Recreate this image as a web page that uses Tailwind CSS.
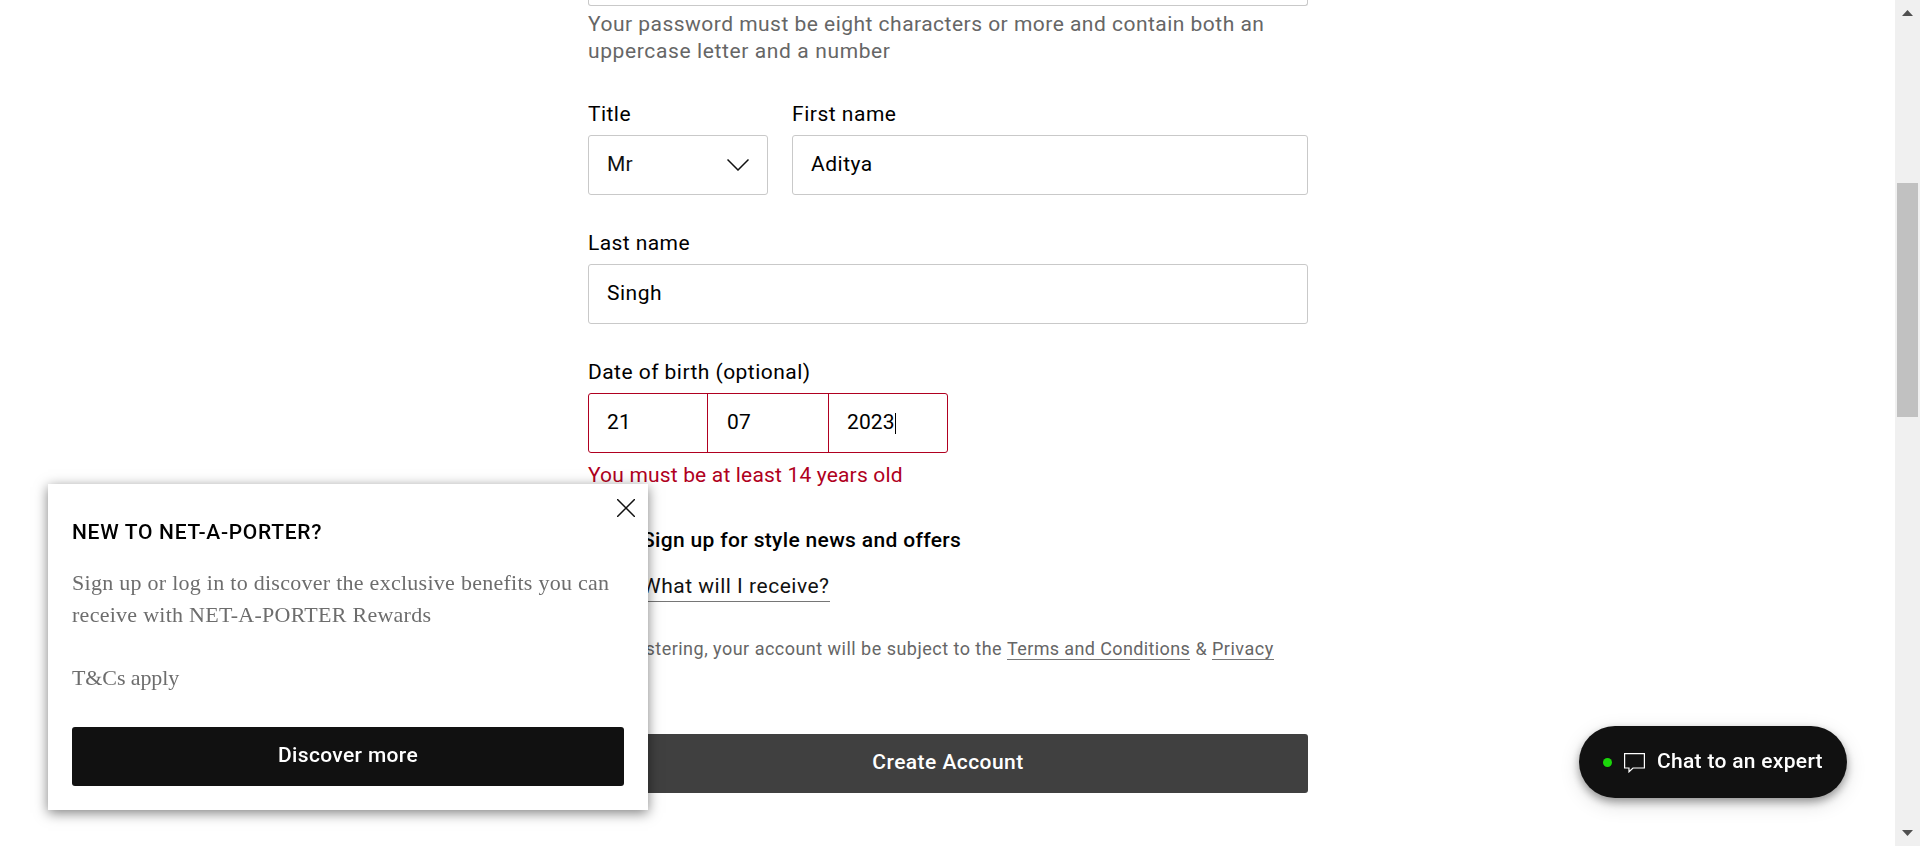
<!DOCTYPE html>
<html lang="en">
<head>
<meta charset="utf-8">
<title>Create account</title>
<script src="https://cdn.jsdelivr.net/npm/@tailwindcss/browser@4"></script>
</head>
<body class="h-[846px] overflow-hidden bg-white font-['Roboto',sans-serif] text-[21px] leading-[27px] text-black">
<div class="flex h-full">
  <main class="flex-1 pl-[588px]">
    <form class="flex w-[720px] flex-col">
      <div class="h-1.5 rounded-b-[3px] border border-t-0 border-[#c9c9c9]"></div>
      <p class="mt-[5px] whitespace-nowrap tracking-[0.48px] text-[#666]">Your password must be eight characters or more and contain both an<br><span class="tracking-[0.62px]">uppercase letter and a number</span></p>

      <div class="mt-9 flex gap-6">
        <div class="w-[180px]">
          <label class="block tracking-[0.45px]">Title</label>
          <div class="mt-[7px] flex h-[60px] items-center justify-between rounded-[3px] border border-[#c9c9c9] pr-[18px] pb-0.5 pl-[18px]">
            <span class="tracking-[0.1px] text-[#111]">Mr</span>
            <svg class="mt-0.5 h-3 w-[22px]" viewBox="0 0 22 12" fill="none" stroke="#111" stroke-width="1.5"><path d="M.5 .5 11 11 21.500 .5"/></svg>
          </div>
        </div>
        <div class="flex-1">
          <label class="block tracking-[0.52px]">First name</label>
          <div class="mt-[7px] flex h-[60px] items-center rounded-[3px] border border-[#c9c9c9] pb-0.5 pl-[18px] tracking-[0.5px]">Aditya</div>
        </div>
      </div>

      <label class="mt-[35px] block tracking-[0.42px]">Last name</label>
      <div class="mt-[7px] flex h-[60px] items-center rounded-[3px] border border-[#c9c9c9] pb-0.5 pl-[18px] tracking-[0.5px]">Singh</div>

      <label class="mt-[35px] block tracking-[0.46px]">Date of birth (optional)</label>
      <div class="mt-[7px] flex h-[60px] w-[360px] rounded-[3px] border border-[#b00020] tracking-[0.1px]">
        <div class="flex w-[119px] items-center border-r border-[#b00020] pb-0.5 pl-[18px]">21</div>
        <div class="flex w-[121px] items-center border-r border-[#b00020] pb-0.5 pl-[19px]">07</div>
        <div class="flex flex-1 items-center pb-0.5 pl-[18px]">2023<span class="mt-0.5 h-[21px] w-px bg-black"></span></div>
      </div>
      <p class="mt-[9px] tracking-[0.17px] text-[#b00020]">You must be at least 14 years old</p>

      <div class="mt-[38px] flex flex-col items-start pl-[54px]">
        <p class="font-medium tracking-[0.34px]">Sign up for style news and offers</p>
        <a class="mt-[19px] h-[29px] border-b border-[#767676] tracking-[0.51px] text-[#111]">What will I receive?</a>
      </div>

      <p class="mt-[35px] flex h-6 text-[18px] leading-6 whitespace-nowrap text-[#666]">
        <span class="w-[419px] tracking-[0.48px]">By registering, your account will be subject to the</span>
        <a class="h-[23px] w-[183px] border-b border-[#767676] tracking-[0.38px]">Terms and Conditions</a>
        <span class="w-[22px] text-center">&amp;</span>
        <a class="h-[23px] w-[62px] border-b border-[#767676] tracking-[0.5px]">Privacy</a>
      </p>

      <button type="button" class="mt-[73px] h-[59px] rounded-[3px] bg-[#404040] pb-[3px] font-medium tracking-[0.45px] text-white">Create Account</button>
    </form>
  </main>

  <div class="flex w-[25px] flex-col items-center justify-between bg-[#f0f0f0]">
    <svg class="mt-2.5 h-1.5 w-[11px]" viewBox="0 0 11 6"><path d="M0 6 5.500 0 11 6z" fill="#505050"/></svg>
    <div class="mt-[167px] h-[234px] w-[21px] bg-[#c1c1c1]"></div>
    <svg class="mt-auto mb-2.5 h-1.5 w-[11px]" viewBox="0 0 11 6"><path d="M0 0 5.500 6 11 0z" fill="#505050"/></svg>
  </div>
</div>

<!-- Rewards pop-up -->
<aside class="fixed top-[484px] left-12 flex h-[326px] w-[600px] flex-col bg-white px-6 pt-[35px] shadow-[0_3px_12px_rgba(0,0,0,0.5)]">
  <svg class="absolute top-[15px] right-[13px] size-[18px]" viewBox="0 0 18 18" stroke="#111" stroke-width="1.5"><path d="M0 0 18 18M18 0 0 18"/></svg>
  <h2 class="font-medium tracking-[0.7px]">NEW TO NET-A-PORTER?</h2>
  <p class="mt-[21px] font-['Liberation_Serif',serif] text-[22px] leading-[31.500px] tracking-[0.27px] whitespace-nowrap text-[#6d6d6d]">Sign up or log in to discover the exclusive benefits you can<br>receive with NET-A-PORTER Rewards<br><br><span class="tracking-[-0.1px]">T&amp;Cs apply</span></p>
  <button class="mt-auto mb-6 h-[59px] rounded-[3px] bg-[#111] pb-[3px] font-medium tracking-[0.35px] text-white">Discover more</button>
</aside>

<!-- Chat launcher -->
<div class="fixed top-[726px] left-[1579px] flex h-[72px] w-[268px] items-center rounded-full bg-[#111] pl-6 text-white shadow-[0_4px_8px_rgba(0,0,0,0.35),0_6px_20px_rgba(0,0,0,0.15)]">
  <span class="mt-px size-[9px] rounded-full bg-[#1bd60a]"></span>
  <svg class="mt-px ml-3 h-5 w-[21px]" viewBox="0 0 21 20" fill="none" stroke="#fff" stroke-width="1.2"><path d="M.6 .6H20.400V15H9L5 18.800V15H.6z"/></svg>
  <span class="ml-3 pb-0.5 font-medium tracking-[0.3px] whitespace-nowrap">Chat to an expert</span>
</div>
</body>
</html>
